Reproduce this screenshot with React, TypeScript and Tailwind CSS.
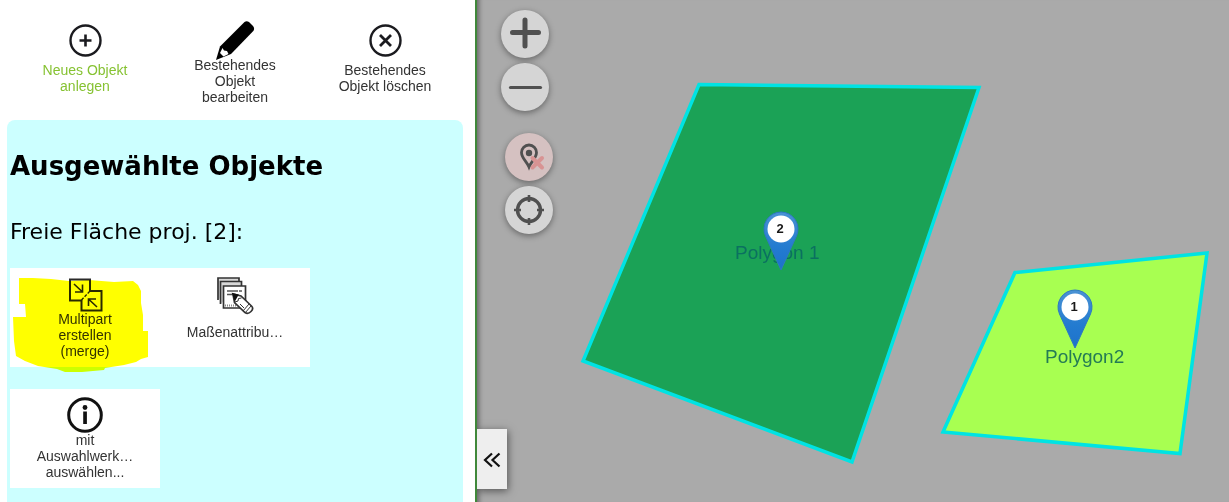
import type { ReactNode } from 'react';

function ToolButton({ icon, children, tone = 'text-[#333333]', card = false }: { icon: ReactNode; children: ReactNode; tone?: string; card?: boolean }) {
  return (
    <button type="button" className={`flex h-[99px] w-[150px] shrink-0 flex-col items-center pt-2 text-center text-[14px] leading-4 ${card ? 'bg-white' : ''} ${tone}`}>
      <span className={`flex w-10 shrink-0 items-start justify-center ${card ? 'h-[35px]' : 'h-9'}`}>{icon}</span>
      <span className="flex min-h-[42px] w-[102px] flex-col justify-center">{children}</span>
    </button>
  );
}

function CirclePlus() {
  return (
    <svg width="36" height="36" viewBox="0 0 36 36" fill="none" stroke="#1b1b1f" className="shrink-0">
      <circle cx="18.5" cy="19.5" r="15" strokeWidth="2.4" />
      <path d="M18.500 13.500v12M12.500 19.500h12" strokeWidth="2.6" />
    </svg>
  );
}

function CircleCross() {
  return (
    <svg width="36" height="36" viewBox="0 0 36 36" fill="none" stroke="#1b1b1f" className="shrink-0">
      <circle cx="18.5" cy="19.5" r="15" strokeWidth="2.4" />
      <path d="M13 14l11 11M24 14L13 25" strokeWidth="2.8" />
    </svg>
  );
}

function Pencil() {
  return (
    <svg width="40" height="40" viewBox="0 0 40 40" className="shrink-0">
      <path d="M29.500 1Q31.500-.6 34 1l4 4q2 2.500.3 5L16 33 1 39 5 25.500Z" fill="#000" />
      <path d="M7.500 27l1.500 2.500 3 .5 1.500 3-5 2.500-3.500-3.500Z" fill="#fff" />
    </svg>
  );
}

function MergeIcon() {
  return (
    <svg width="36" height="36" viewBox="0 0 36 36" fill="none" stroke="#2a2a2a" strokeWidth="2" className="shrink-0">
      <path d="M3 3.500h20v11.500H34.500v19.500H14.500V24.500H3Z" />
      <path d="M14.500 24l8.500-9" strokeDasharray="3 1.500" strokeWidth="1.300" />
      <path d="M7 8l8 7.500M15.500 8.500V16H8M30 31l-8-7.500M21.500 30v-7H29" strokeWidth="1.600" />
    </svg>
  );
}

function StackPencilIcon() {
  return (
    <svg width="38" height="40" viewBox="0 0 38 40" fill="none" stroke="#333" strokeWidth="1.700" className="shrink-0">
      <path d="M2 24V2h21v4" fill="#d8d8d8" />
      <path d="M4.500 28V5.500h21v5" fill="#d8d8d8" />
      <path d="M7.500 32V10h22v22Z" fill="#fff" />
      <path d="M11 15h11M23 15h3M11 18.500h5" strokeWidth="1.500" stroke="#555" />
      <path d="M9 29.500h11" strokeWidth="2" strokeDasharray="1 1" stroke="#888" />
      <path d="M17 18l1.500 8.500 10.500 10q3 2 6-1t.5-5.500L25 20Z" fill="#fff" />
      <path d="M17 18l4.500 1-2.500 4.500Z" fill="#111" stroke="#111" />
      <path d="M19 26l3-1 .5-2.500 3-.5M27 35l6-7M29 37l6-7M24 28l4 4" strokeWidth="1" />
    </svg>
  );
}

function InfoIcon() {
  return (
    <svg width="36" height="36" viewBox="0 0 36 36" className="shrink-0">
      <circle cx="18" cy="18" r="16.300" fill="none" stroke="#111" strokeWidth="3" />
      <circle cx="18" cy="10.500" r="2.400" fill="#111" />
      <path d="M16.200 14.500h3.700V27h-3.700Z" fill="#111" />
    </svg>
  );
}

function MapButton({ label, danger = false, children }: { label: string; danger?: boolean; children: ReactNode }) {
  return (
    <button type="button" aria-label={label} className={`size-12 rounded-full shadow-[0_2px_6px_rgba(0,0,0,0.4)] ${danger ? 'bg-[#d5c1c1]' : 'bg-[#d5d5d5]'}`}>
      <svg width="48" height="48" viewBox="0 0 48 48" fill="none" stroke="#505050" strokeLinecap="round">
        {children}
      </svg>
    </button>
  );
}

function Pin({ x, y, count }: { x: number; y: number; count: string }) {
  return (
    <g transform={`translate(${x} ${y})`}>
      <path d="M0 0L-15.500-34A17 17 0 1 1 15.500-34Z" fill="url(#pinFill)" stroke="#2e78c2" strokeWidth="1" />
      <circle cy="-41" r="13.500" fill="#fff" />
      <text x="-1" y="-37" textAnchor="middle" fontSize="13" fontWeight="700" fill="#181818">{count}</text>
    </g>
  );
}

function MapDrawing() {
  return (
    <svg width="752" height="502" viewBox="0 0 752 502" className="block font-['Liberation_Sans',sans-serif]">
      <defs>
        <linearGradient id="pinFill" x1="0" y1="0" x2="0" y2="1">
          <stop offset="0" stopColor="#4a92d4" />
          <stop offset="0.600" stopColor="#237bd0" />
          <stop offset="1" stopColor="#1d72cb" />
        </linearGradient>
      </defs>
      <g stroke="#00e3e3" strokeWidth="3.500">
        <path d="M222 84.500L502 87.500 375 462 106 361Z" fill="#1ba256" />
        <path d="M538 272.500L730 253 703 453.500 466 432Z" fill="#a8ff51" />
      </g>
      <g fontSize="19">
        <text x="258" y="259" fill="#0b7060">Polygon 1</text>
        <text x="568" y="363" fill="#247b55">Polygon2</text>
      </g>
      <Pin x={304} y={270} count="2" />
      <Pin x={598} y={348} count="1" />
    </svg>
  );
}

export default function App() {
  return (
    <div className="flex h-screen overflow-hidden bg-white font-['Liberation_Sans',Arial,sans-serif]">
      <aside className="flex w-[477px] shrink-0 flex-col border-r-2 border-[#40883a] pt-[13px]">
        <nav className="flex px-[10px] pb-2">
          <ToolButton icon={<CirclePlus />} tone="text-[#86c232]">Neues Objekt anlegen</ToolButton>
          <ToolButton icon={<Pencil />}>Bestehendes Objekt bearbeiten</ToolButton>
          <ToolButton icon={<CircleCross />}>Bestehendes Objekt löschen</ToolButton>
        </nav>
        <section className="mr-3 ml-[7px] grow rounded-t-lg bg-[#ccffff] px-[3px] pt-[30px] font-['DejaVu_Sans',Verdana,sans-serif] text-black">
          <h1 className="text-[26px] leading-8 font-bold">Ausgewählte Objekte</h1>
          <h2 className="mt-9 text-[22px] leading-7">Freie Fläche proj. [2]:</h2>
          <div className="mt-[22px] flex flex-col gap-[22px] font-['Liberation_Sans',Arial,sans-serif]">
            <div className="relative flex">
              <ToolButton card icon={<MergeIcon />}>
                <span>Multipart</span>
                <span>erstellen</span>
                <span>(merge)</span>
              </ToolButton>
              <ToolButton card icon={<StackPencilIcon />}>Maßenattribu…</ToolButton>
              <svg width="140" height="106" viewBox="0 0 140 106" className="pointer-events-none absolute top-0 left-0 mix-blend-multiply">
                <path fill="#ffff00" d="M9 10h14l18 1 18 2 20-1 25 2 19-1 5 4 3 6v12l2 12v16h5v26l-7 2-5 3-12 3-19 3-1 2-22 2H55l-8-3-19-3-13-5-9-5-2-15-1-24h13l-1-13H9Z" />
              </svg>
            </div>
            <ToolButton card icon={<InfoIcon />}>
              <span>mit</span>
              <span>Auswahlwerk…</span>
              <span>auswählen...</span>
            </ToolButton>
          </div>
        </section>
      </aside>

      <main className="relative min-w-0 grow overflow-hidden bg-[#aaaaaa]">
        <MapDrawing />
        <div className="pointer-events-none absolute inset-0 shadow-[inset_7px_0_5px_-5px_rgba(0,0,0,0.4)]" />
        <div className="absolute top-[10px] left-6 flex flex-col gap-[22px]">
          <div className="flex flex-col gap-[5px]">
            <MapButton label="Vergrößern"><path d="M24 10v26M11.500 22.500h26" strokeWidth="5" /></MapButton>
            <MapButton label="Verkleinern"><path d="M9.500 24.500h30" strokeWidth="3.200" /></MapButton>
          </div>
          <div className="ml-1 flex flex-col gap-[5px]">
            <MapButton label="Markierung entfernen" danger>
              <path d="M24 34C22 29 16.500 25 16.500 19.500a7.500 7.500 0 0 1 15 0C31.500 25 26 29 24 34Z" strokeWidth="2.800" />
              <circle cx="24" cy="20" r="3.200" fill="#505050" stroke="none" />
              <path d="M27.500 25l9.500 9.500M37 25l-9.500 9.500" stroke="#d89393" strokeWidth="4" />
            </MapButton>
            <MapButton label="Standort">
              <circle cx="24" cy="24" r="11.500" strokeWidth="3.400" />
              <path d="M24 9v7M24 32v7M9 24h7M32 24h7" strokeWidth="2.600" strokeLinecap="butt" />
            </MapButton>
          </div>
        </div>
        <button type="button" aria-label="Seitenleiste einklappen" className="absolute bottom-[13px] left-0 flex h-[60px] w-[30px] items-center justify-center bg-[#eeeeee] shadow-[1px_2px_8px_rgba(0,0,0,0.5)]">
          <svg width="18" height="18" viewBox="0 0 18 18" fill="none" stroke="#111" strokeWidth="2.200">
            <path d="M9 3.500L2 10l7 6.500M16.500 3.500L9.500 10l7 6.500" />
          </svg>
        </button>
      </main>
    </div>
  );
}
